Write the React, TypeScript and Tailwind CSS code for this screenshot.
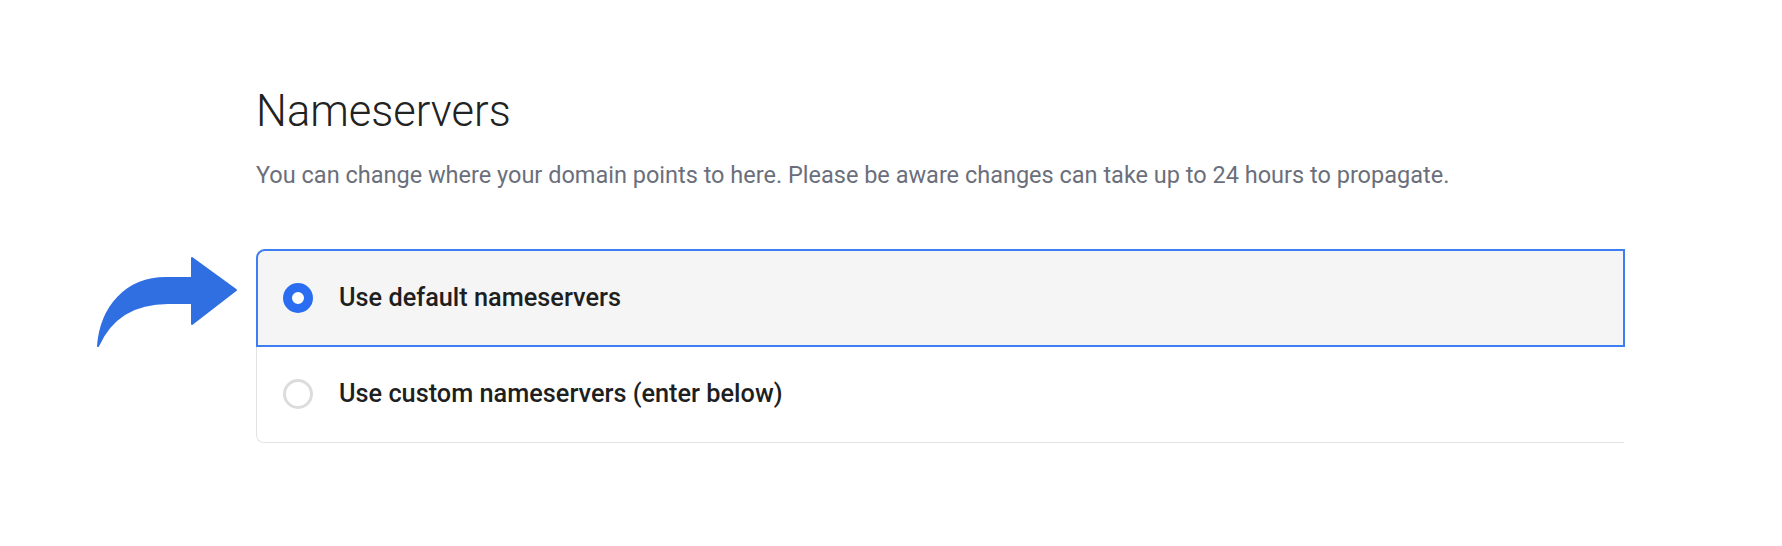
import { useState } from "react";

const options = [
  { id: "default", label: "Use default nameservers" },
  { id: "custom", label: "Use custom nameservers (enter below)" },
];

function CurvedArrow() {
  return (
    <svg width="144" height="94" viewBox="0 0 144 94" className="absolute left-[-160px] top-[6px]">
      <path
        d="M2 91 C 5 52, 30 23, 70 23 L 96 23 L 96 3 L 140 35 L 96 69 L 96 48 L 72 48 C 42 48, 16 60, 2 91 Z"
        fill="#2f6fe2"
        stroke="#2f6fe2"
        strokeWidth="2"
        strokeLinejoin="round"
      />
    </svg>
  );
}

export default function App() {
  const [selected, setSelected] = useState("default");

  return (
    <div className="w-[1782px] h-[546px] bg-white overflow-hidden font-['Roboto',sans-serif]">
      <div className="pl-[256px] pt-[90px]">
        <h1 className="text-[43.5px] leading-[44px] font-light text-[#222222]">Nameservers</h1>
        <p className="mt-[29px] text-[23.5px] leading-[24px] text-[#6b6f7b]">
          You can change where your domain points to here. Please be aware changes can take up to 24 hours to propagate.
        </p>

        {/* Options */}
        <div className="relative mt-[62px] w-[1368px]">
          <CurvedArrow />
          <div className="rounded-l-lg border border-r-0 border-[#e2e2e2]">
            {options.map((opt) => {
              const isSelected = selected === opt.id;
              return (
                <button
                  key={opt.id}
                  onClick={() => setSelected(opt.id)}
                  className={`w-full h-[96px] flex items-center gap-[26px] pl-[26px] text-left ${
                    isSelected
                      ? "bg-[#f5f5f5] outline-2 -outline-offset-1 outline-[#3d7ff2] rounded-tl-lg"
                      : "bg-white rounded-bl-lg"
                  }`}
                >
                  <span
                    className={`w-[30px] h-[30px] rounded-full flex-none ${
                      isSelected ? "border-[9px] border-[#2b6df0] bg-white" : "border-[3px] border-[#dcdcdc] bg-white"
                    }`}
                  />
                  <span className="text-[25.3px] font-medium text-[#1f1f1f]">{opt.label}</span>
                </button>
              );
            })}
          </div>
        </div>
      </div>
    </div>
  );
}
